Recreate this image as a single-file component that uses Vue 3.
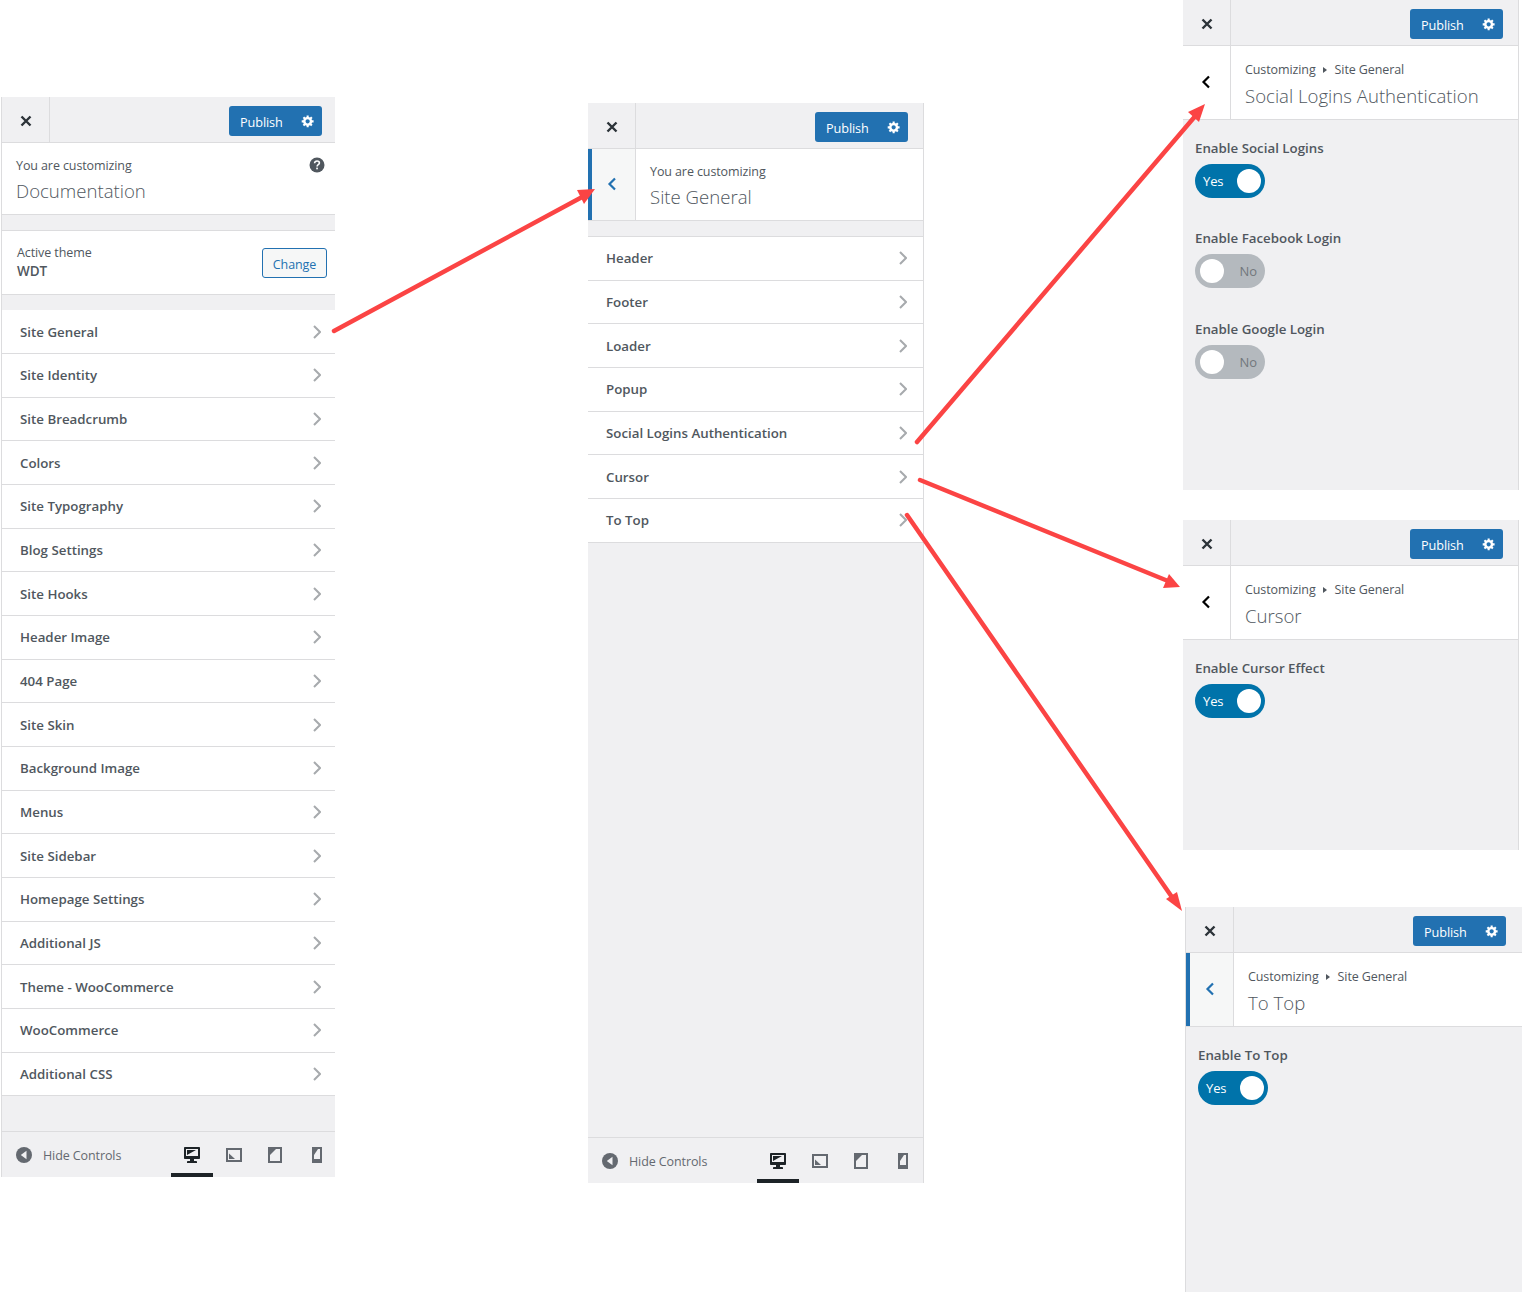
<script setup>
const gear = 'M18 12h-2.18c-.17.7-.44 1.35-.81 1.93l1.54 1.54-2.1 2.1-1.54-1.54c-.58.36-1.23.63-1.91.79V19H8v-2.18c-.68-.16-1.33-.43-1.91-.79l-1.54 1.54-2.12-2.12 1.54-1.54c-.36-.58-.63-1.23-.79-1.91H1V9.03h2.17c.16-.7.44-1.35.8-1.94L2.43 5.55l2.1-2.1 1.54 1.54c.58-.37 1.24-.64 1.93-.81V2h3v2.18c.68.16 1.33.43 1.91.79l1.54-1.54 2.12 2.12-1.54 1.54c.36.59.64 1.24.8 1.94H18V12zm-8.5 1.5c1.66 0 3-1.34 3-3s-1.34-3-3-3-3 1.34-3 3 1.34 3 3 3z'

const mainMenu = [
  'Site General', 'Site Identity', 'Site Breadcrumb', 'Colors', 'Site Typography', 'Blog Settings',
  'Site Hooks', 'Header Image', '404 Page', 'Site Skin', 'Background Image', 'Menus', 'Site Sidebar',
  'Homepage Settings', 'Additional JS', 'Theme - WooCommerce', 'WooCommerce', 'Additional CSS',
]
const generalMenu = ['Header', 'Footer', 'Loader', 'Popup', 'Social Logins Authentication', 'Cursor', 'To Top']

const panels = [
  { id: 'root', left: 1, top: 97, width: 334, height: 1080, cls: 'edgeLeft tight', title: 'Documentation', root: true, menu: mainMenu, footer: true },
  { id: 'general', left: 588, top: 103, width: 336, height: 1080, cls: 'edgeRight', title: 'Site General', back: 'active', menu: generalMenu, footer: true },
  { id: 'social', left: 1183, top: 0, width: 336, height: 490, cls: 'edgeRight', title: 'Social Logins Authentication', crumb: true, back: 'plain',
    fields: [
      { label: 'Enable Social Logins', on: true },
      { label: 'Enable Facebook Login', on: false },
      { label: 'Enable Google Login', on: false },
    ] },
  { id: 'cursor', left: 1183, top: 520, width: 336, height: 330, cls: 'edgeRight', title: 'Cursor', crumb: true, back: 'plain',
    fields: [{ label: 'Enable Cursor Effect', on: true }] },
  { id: 'top', left: 1185, top: 907, width: 337, height: 385, cls: 'edgeLeft', title: 'To Top', crumb: true, back: 'active',
    fields: [{ label: 'Enable To Top', on: true }] },
]

const arrows = [
  { x1: 334, y1: 331, x2: 584, y2: 196, head: '595,189 577,190 584,204' },
  { x1: 917, y1: 442, x2: 1197, y2: 114, head: '1205,104 1188,112 1199,122' },
  { x1: 920, y1: 480, x2: 1168, y2: 581, head: '1180,587 1169,574 1163,588' },
  { x1: 907, y1: 515, x2: 1174, y2: 900, head: '1182,911 1166,899 1177,892' },
]
</script>

<template>
  <div class="canvas">
    <section
      v-for="p in panels"
      :key="p.id"
      class="panel"
      :class="p.cls"
      :style="{ left: p.left + 'px', top: p.top + 'px', width: p.width + 'px', height: p.height + 'px' }"
    >
      <div class="topBar">
        <button class="closeBtn">
          <svg width="12" height="12" viewBox="0 0 12 12"><path d="M1.5 1.5l9 9M10.5 1.5l-9 9" stroke="#2c3338" stroke-width="2.4" fill="none" /></svg>
        </button>
        <div class="publish">
          <span>Publish</span>
          <svg width="14" height="14" viewBox="0 0 20 20"><path :d="gear" fill="#fff" /></svg>
        </div>
      </div>

      <div class="info" :class="{ hasCrumb: p.crumb }">
        <button v-if="p.back" class="backBtn" :class="p.back">
          <svg width="10" height="16" viewBox="0 0 10 16"><path d="M8 2.500L2.500 8 8 13.500" fill="none" stroke-width="2.2" /></svg>
        </button>
        <div class="infoText">
          <div v-if="p.crumb" class="action">Customizing <i class="crumbArrow"></i> Site General</div>
          <div v-else class="action">You are customizing</div>
          <div class="title">{{ p.title }}</div>
        </div>
        <svg v-if="p.root" class="help" width="16" height="16" viewBox="0 0 16 16">
          <circle cx="8" cy="8" r="7.500" fill="#50575e" />
          <path d="M5.600 6.200c0-1.400 1-2.200 2.400-2.200s2.400.8 2.400 2c0 1.700-2.300 1.700-2.300 3.400" fill="none" stroke="#fff" stroke-width="1.600" />
          <rect x="7.200" y="10.600" width="1.700" height="1.700" fill="#fff" />
        </svg>
      </div>

      <template v-if="p.root">
        <div class="spacer"></div>
        <div class="theme">
          <div>
            <div class="themeLabel">Active theme</div>
            <div class="themeName">WDT</div>
          </div>
          <button class="changeBtn">Change</button>
        </div>
      </template>

      <div v-if="p.menu" class="spacer menuGap"></div>
      <ul v-if="p.menu" class="menu">
        <li v-for="item in p.menu" :key="item" class="menuItem">
          <span>{{ item }}</span>
          <svg width="8" height="14" viewBox="0 0 8 14"><path d="M1 1l6 6-6 6" fill="none" stroke="#a7aaad" stroke-width="2" /></svg>
        </li>
      </ul>

      <div v-if="p.fields" class="fields">
        <div v-for="f in p.fields" :key="f.label" class="field">
          <div class="fieldLabel">{{ f.label }}</div>
          <div class="toggle" :class="f.on ? 'on' : 'off'">
            <span>{{ f.on ? 'Yes' : 'No' }}</span>
            <i class="knob"></i>
          </div>
        </div>
      </div>

      <div v-if="p.footer" class="footer">
        <div class="hide">
          <svg width="16" height="16" viewBox="0 0 16 16">
            <circle cx="8" cy="8" r="8" fill="#646970" />
            <path d="M10.500 3.800v8.400L4.800 8z" fill="#f0f0f2" />
          </svg>
          <span class="hideText">Hide Controls</span>
        </div>
        <div class="devices">
          <div class="device active">
            <svg width="20" height="20" viewBox="0 0 20 20"><path fill="#1d2327" d="M3 2h14c.55 0 1 .45 1 1v10c0 .55-.45 1-1 1h-5v2h2c.55 0 1 .45 1 1v1H5v-1c0-.55.45-1 1-1h2v-2H3c-.55 0-1-.45-1-1V3c0-.55.45-1 1-1zm13 9V4H4v7h12zM5 5h9L5 10V5z" /></svg>
          </div>
          <div class="device">
            <svg width="20" height="20" viewBox="0 0 20 20"><rect x="3" y="4" width="14" height="12" fill="none" stroke="#646970" stroke-width="2" /><path d="M5 8.500V14h6z" fill="#646970" /></svg>
          </div>
          <div class="device">
            <svg width="20" height="20" viewBox="0 0 20 20"><rect x="4" y="3" width="12" height="14" fill="none" stroke="#646970" stroke-width="2" /><path d="M5 4h6l-6 6z" fill="#646970" /></svg>
          </div>
          <div class="device">
            <svg width="20" height="20" viewBox="0 0 20 20"><rect x="6" y="3" width="8" height="14" fill="none" stroke="#646970" stroke-width="2" /><rect x="6" y="14" width="8" height="3" fill="#646970" /><path d="M7 4h4l-4 6z" fill="#646970" /></svg>
          </div>
        </div>
      </div>
    </section>

    <!-- red annotation arrows sit over the panels -->
    <svg class="arrows" width="1522" height="1292" viewBox="0 0 1522 1292">
      <g v-for="(a, i) in arrows" :key="i">
        <line :x1="a.x1" :y1="a.y1" :x2="a.x2" :y2="a.y2" stroke="#fb4444" stroke-width="4.500" stroke-linecap="round" />
        <polygon :points="a.head" fill="#fb4444" />
      </g>
    </svg>
  </div>
</template>

<style>
html,
body {
  background: #fff;
}
</style>

<style scoped>
.canvas {
  position: relative;
  width: 1522px;
  height: 1292px;
  overflow: hidden;
  font-family: "Open Sans", "Noto Sans", sans-serif;
  font-size: 12.5px;
  letter-spacing: -0.1px;
  color: #50575e;
}

.panel {
  position: absolute;
  box-sizing: border-box;
  display: flex;
  flex-direction: column;
  background: #f0f0f2;
}
.edgeLeft {
  border-left: 1px solid #dcdcde;
}
.edgeRight {
  border-right: 1px solid #dcdcde;
}

.topBar {
  display: flex;
  justify-content: space-between;
  align-items: center;
  height: 46px;
  flex: none;
  box-sizing: border-box;
  padding-right: 15px;
  border-bottom: 1px solid #dcdcde;
}
.edgeLeft .topBar {
  padding-right: 16px;
}
.tight .topBar {
  padding-right: 13px;
}
.closeBtn {
  width: 48px;
  height: 45px;
  padding: 3px 0 0;
  border: 0;
  border-right: 1px solid #dcdcde;
  background: transparent;
  display: flex;
  align-items: center;
  justify-content: center;
  box-sizing: border-box;
}
.publish {
  width: 93px;
  height: 30px;
  margin-top: 3px;
  box-sizing: border-box;
  padding: 1px 7px 0 11px;
  border-radius: 3px;
  background: #2271b1;
  color: #fff;
  display: flex;
  align-items: center;
  justify-content: space-between;
  font-size: 12.7px;
}
.publish svg {
  margin-top: -1px;
}

.info {
  display: flex;
  flex: none;
  height: 72px;
  box-sizing: border-box;
  position: relative;
  background: #fff;
  border-bottom: 1px solid #dcdcde;
}
.info.hasCrumb {
  height: 74px;
}
.infoText {
  padding: 13px 0 0 14px;
}
.hasCrumb .infoText {
  padding-top: 14px;
}
.action {
  line-height: 20px;
  display: flex;
  align-items: center;
  gap: 7.500px;
}
.crumbArrow {
  width: 0;
  height: 0;
  border-left: 4px solid #50575e;
  border-top: 3px solid transparent;
  border-bottom: 3px solid transparent;
}
.title {
  margin-top: 1px;
  font-size: 18.6px;
  line-height: 28px;
  font-weight: 300;
  letter-spacing: 0;
  color: #50575e;
  white-space: nowrap;
}
.hasCrumb .title {
  margin-top: 2px;
}
.help {
  position: absolute;
  right: 10px;
  top: 14px;
}
.backBtn {
  width: 48px;
  flex: none;
  padding: 0 1px 2px 0;
  border: 0;
  border-right: 1px solid #dcdcde;
  display: flex;
  align-items: center;
  justify-content: center;
  background: #fff;
  box-sizing: border-box;
}
.backBtn.plain path {
  stroke: #000;
}
.backBtn.active {
  background: #f6f7f7;
  border-left: 4px solid #2271b1;
  padding-right: 4px;
}
.backBtn.active path {
  stroke: #2271b1;
}

.spacer {
  height: 15px;
  flex: none;
}
.tight .menuGap {
  height: 15.200px;
}
.theme {
  flex: none;
  height: 65px;
  box-sizing: border-box;
  padding: 0 8px 0 15px;
  display: flex;
  align-items: center;
  justify-content: space-between;
  background: #fff;
  border-top: 1px solid #dcdcde;
  border-bottom: 1px solid #dcdcde;
}
.themeLabel {
  line-height: 19px;
  margin-top: -2px;
}
.themeName {
  font-size: 13.5px;
  font-weight: 600;
  line-height: 18px;
}
.changeBtn {
  width: 65px;
  height: 30px;
  padding: 3px 0 0;
  border: 1px solid #2271b1;
  border-radius: 3px;
  background: #f6f7f7;
  color: #2271b1;
  font: inherit;
  letter-spacing: inherit;
}

.menu {
  list-style: none;
  margin: 0;
  padding: 0;
  flex: none;
}
.menuItem {
  height: 43.68px;
  box-sizing: border-box;
  display: flex;
  align-items: center;
  justify-content: space-between;
  padding: 0 14px 0 18px;
  background: #fff;
  border-bottom: 1px solid #dcdcde;
  font-size: 13.3px;
  letter-spacing: 0;
  font-weight: 600;
}
.edgeRight .menu {
  border-top: 1px solid #dcdcde;
}
.edgeRight .menuItem {
  padding-right: 16px;
}

.fields {
  padding: 17.700px 12px 0;
}
.field {
  height: 90.500px;
}
.fieldLabel {
  font-size: 13.300px;
  letter-spacing: 0;
  font-weight: 600;
  line-height: 20px;
}
.toggle {
  position: relative;
  width: 70px;
  height: 34px;
  margin-top: 6px;
  box-sizing: border-box;
  border-radius: 17px;
  display: flex;
  align-items: center;
  font-size: 13px;
}
.toggle.on {
  background: #0073aa;
  color: #fff;
  padding-left: 8px;
}
.toggle.off {
  background: #b4b9be;
  color: #72777c;
  justify-content: flex-end;
  padding-right: 8px;
}
.knob {
  position: absolute;
  top: 5px;
  width: 24px;
  height: 24px;
  border-radius: 50%;
  background: #fff;
}
.toggle.on .knob {
  right: 4px;
}
.toggle.off .knob {
  left: 5px;
}

.footer {
  margin-top: auto;
  flex: none;
  height: 46px;
  box-sizing: border-box;
  border-top: 1px solid #dcdcde;
  display: flex;
  align-items: center;
  justify-content: space-between;
}
.hide {
  display: flex;
  align-items: center;
  gap: 11px;
  padding-left: 14px;
  color: #646970;
}
.hideText {
  padding-top: 2px;
}
.devices {
  display: flex;
  height: 100%;
  margin-right: -1px;
}
.tight .devices {
  margin-right: -3px;
}
.device {
  width: 41.700px;
  display: flex;
  align-items: center;
  justify-content: center;
  box-sizing: border-box;
  border-bottom: 4px solid transparent;
  padding-top: 4px;
}
.device.active {
  border-bottom-color: #1d2327;
}

.arrows {
  position: absolute;
  left: 0;
  top: 0;
  pointer-events: none;
}
</style>
